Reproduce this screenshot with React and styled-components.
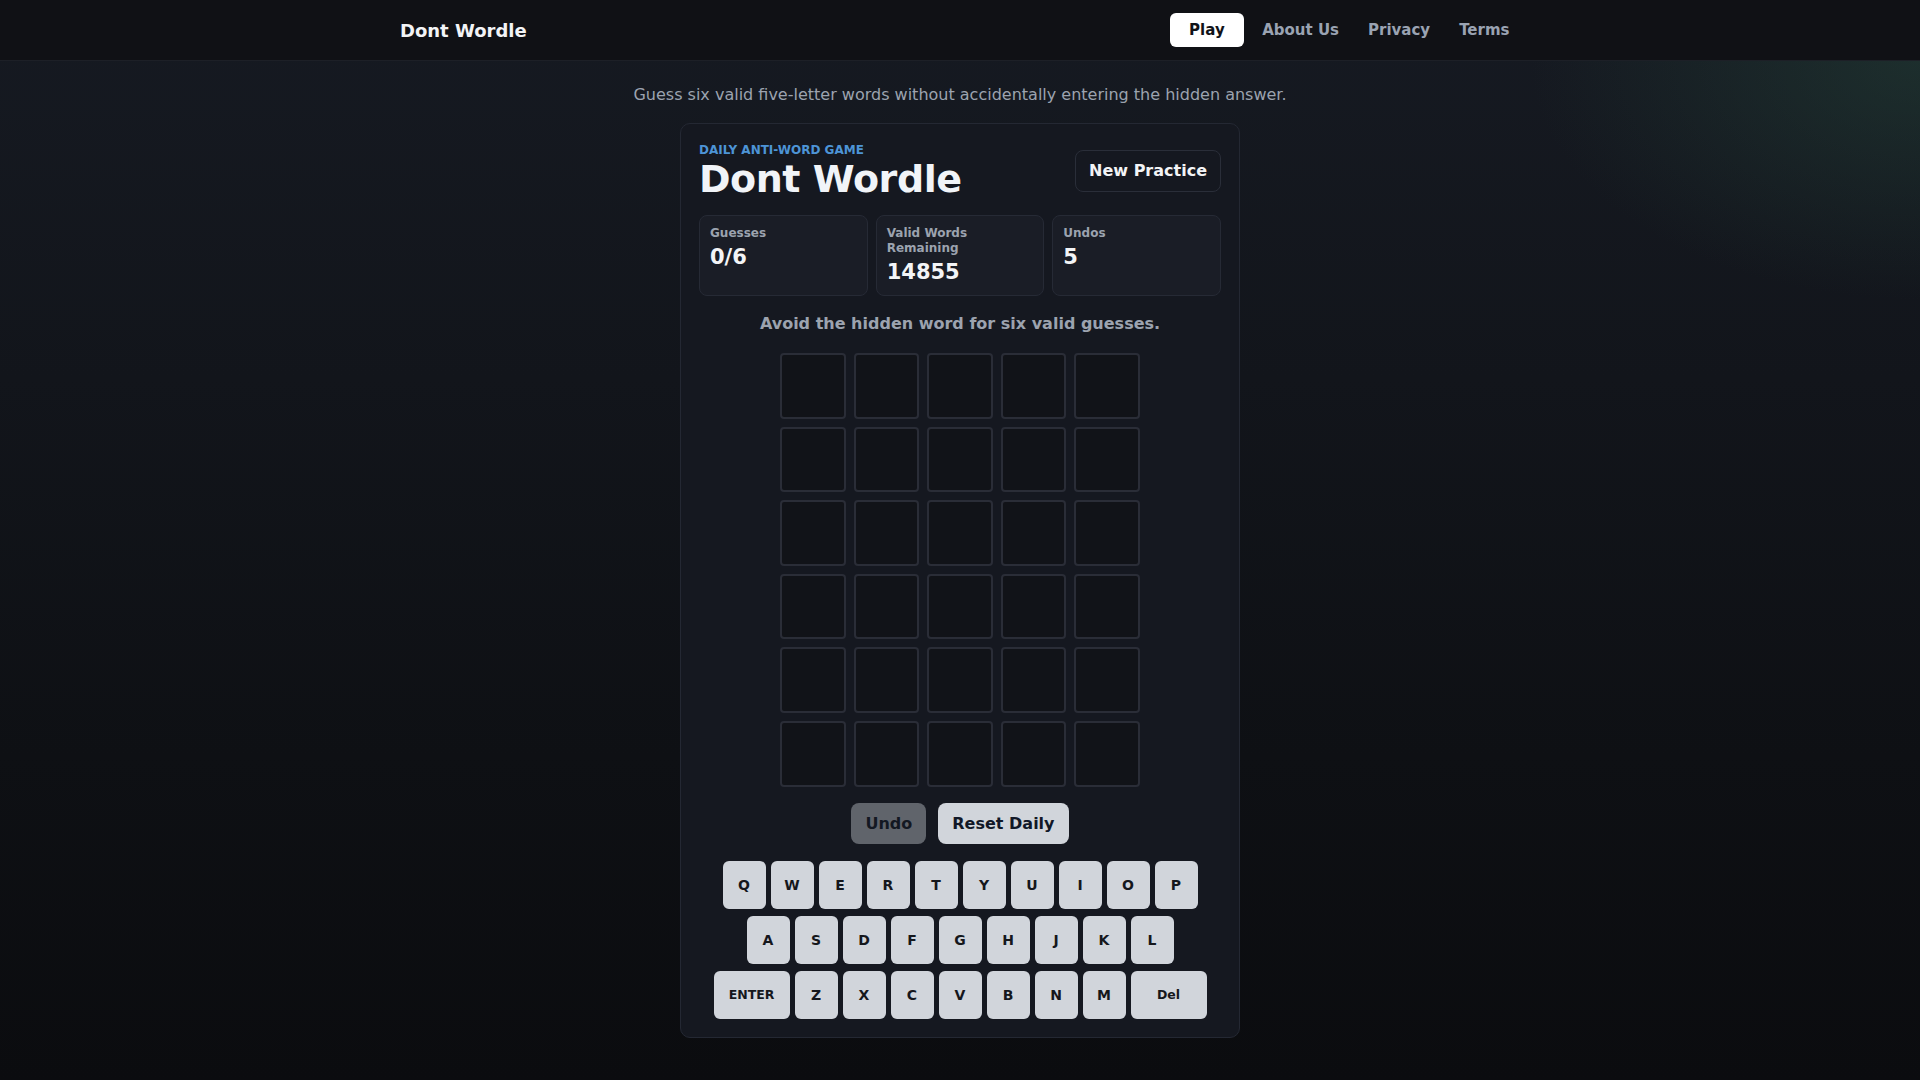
import React from "react";
import styled, { createGlobalStyle } from "styled-components";

const GlobalStyle = createGlobalStyle`
  html, body { margin: 0; padding: 0; }
  body {
    font-family: "DejaVu Sans", "Noto Sans", sans-serif;
    color: #e5e7eb;
    background-color: #0c0d10;
    min-height: 100vh;
  }
  * { box-sizing: border-box; }
`;

const Page = styled.div`
  min-height: 100vh;
  display: flex;
  flex-direction: column;
  background:
    radial-gradient(520px 320px at 100% 60px, rgba(38, 72, 60, 0.45), rgba(38, 72, 60, 0) 75%),
    linear-gradient(180deg, #161a22 0%, #12151b 35%, #0e1014 70%, #0b0c0f 100%);
`;

const Header = styled.header`
  background: #101115;
  border-bottom: 1px solid #1d2027;
`;

const HeaderInner = styled.div`
  max-width: 1120px;
  height: 60px;
  margin: 0 auto;
  display: flex;
  align-items: center;
  justify-content: space-between;
`;

const Brand = styled.a`
  font-size: 18px;
  font-weight: 700;
  color: #f3f4f6;
  text-decoration: none;
`;

const Nav = styled.nav`
  display: flex;
  align-items: center;
  gap: 8px;
`;

const NavLink = styled.a`
  font-size: 15px;
  font-weight: 700;
  line-height: 20px;
  padding: 7px ${(p) => (p.$active ? "19px" : "10.5px")};
  border-radius: 6px;
  text-decoration: none;
  color: ${(p) => (p.$active ? "#111318" : "#9aa3b2")};
  background: ${(p) => (p.$active ? "#ffffff" : "transparent")};
`;

const Main = styled.main`
  flex: 1;
  display: flex;
  flex-direction: column;
  align-items: center;
  padding: 22px 0 24px;
`;

const Tagline = styled.p`
  margin: 0 0 16px;
  font-size: 16px;
  line-height: 24px;
  color: #9ca3af;
`;

const Card = styled.section`
  width: 560px;
  padding: 18px;
  background: #151820;
  border: 1px solid #242833;
  border-radius: 10px;
`;

const CardHead = styled.div`
  display: flex;
  align-items: center;
  justify-content: space-between;
`;

const Eyebrow = styled.div`
  font-size: 12px;
  line-height: 16px;
  font-weight: 700;
  color: #4d94d6;
  margin-bottom: 2px;
`;

const Title = styled.h1`
  margin: 0;
  font-size: 38px;
  line-height: 39px;
  font-weight: 700;
  letter-spacing: -0.45px;
  color: #f1f4f8;
`;

const GhostButton = styled.button`
  font-family: inherit;
  font-size: 16px;
  line-height: 18px;
  font-weight: 700;
  color: #f3f4f6;
  background: #151820;
  border: 1px solid #2a2e39;
  border-radius: 8px;
  padding: 11px 13px;
`;

const Stats = styled.div`
  display: grid;
  grid-template-columns: repeat(3, 1fr);
  gap: 8px;
  margin-top: 16px;
`;

const Stat = styled.div`
  background: #1a1d26;
  border: 1px solid #262a35;
  border-radius: 8px;
  padding: 10px;
`;

const StatLabel = styled.div`
  font-size: 12px;
  line-height: 15px;
  font-weight: 700;
  color: #9ca3af;
`;

const StatValue = styled.div`
  margin-top: 4px;
  font-size: 21px;
  line-height: 25px;
  font-weight: 700;
  color: #f3f4f6;
`;

const Hint = styled.p`
  margin: 16px 0 17px;
  text-align: center;
  font-size: 16px;
  line-height: 24px;
  font-weight: 700;
  color: #9ca3af;
`;

const Board = styled.div`
  width: 360px;
  margin: 0 auto;
  display: grid;
  grid-template-columns: repeat(5, 1fr);
  gap: 8px;
`;

const Tile = styled.div`
  aspect-ratio: 1 / 1;
  background: #111318;
  border: 2px solid #2a2d37;
  border-radius: 4px;
`;

const Actions = styled.div`
  display: flex;
  justify-content: center;
  gap: 12px;
  margin-top: 16px;
`;

const ActionButton = styled.button`
  font-family: inherit;
  font-size: 16px;
  line-height: 19px;
  font-weight: 700;
  padding: 11px 14px;
  border: none;
  border-radius: 8px;
  background: #d1d5db;
  color: #111827;
  opacity: ${(p) => (p.disabled ? 0.4 : 1)};
`;

const Keyboard = styled.div`
  display: flex;
  flex-direction: column;
  align-items: center;
  gap: 7px;
  margin-top: 17px;
`;

const KeyRow = styled.div`
  display: flex;
  gap: 5px;
`;

const Key = styled.button`
  font-family: inherit;
  width: ${(p) => (p.$wide ? "76px" : "43px")};
  height: 48px;
  padding: 0;
  border: none;
  border-radius: 6px;
  background: #d1d5db;
  color: #15171c;
  font-size: ${(p) => (p.$wide ? "12.5px" : "14px")};
  font-weight: 700;
`;

const rows = [
  ["Q", "W", "E", "R", "T", "Y", "U", "I", "O", "P"],
  ["A", "S", "D", "F", "G", "H", "J", "K", "L"],
  ["ENTER", "Z", "X", "C", "V", "B", "N", "M", "Del"],
];

export default function App() {
  return (
    <>
      <GlobalStyle />
      <Page>
        <Header>
          <HeaderInner>
            <Brand href="#">Dont Wordle</Brand>
            <Nav>
              <NavLink $active href="#">Play</NavLink>
              <NavLink href="#">About Us</NavLink>
              <NavLink href="#">Privacy</NavLink>
              <NavLink href="#">Terms</NavLink>
            </Nav>
          </HeaderInner>
        </Header>
        <Main>
          <Tagline>Guess six valid five-letter words without accidentally entering the hidden answer.</Tagline>
          <Card>
            <CardHead>
              <div>
                <Eyebrow>DAILY ANTI-WORD GAME</Eyebrow>
                <Title>Dont Wordle</Title>
              </div>
              <GhostButton>New Practice</GhostButton>
            </CardHead>
            <Stats>
              <Stat>
                <StatLabel>Guesses</StatLabel>
                <StatValue>0/6</StatValue>
              </Stat>
              <Stat>
                <StatLabel>Valid Words Remaining</StatLabel>
                <StatValue>14855</StatValue>
              </Stat>
              <Stat>
                <StatLabel>Undos</StatLabel>
                <StatValue>5</StatValue>
              </Stat>
            </Stats>
            <Hint>Avoid the hidden word for six valid guesses.</Hint>
            <Board>
              {Array.from({ length: 30 }).map((_, i) => (
                <Tile key={i} />
              ))}
            </Board>
            <Actions>
              <ActionButton disabled>Undo</ActionButton>
              <ActionButton>Reset Daily</ActionButton>
            </Actions>
            <Keyboard>
              {rows.map((row, r) => (
                <KeyRow key={r}>
                  {row.map((k) => (
                    <Key key={k} $wide={k.length > 1}>
                      {k}
                    </Key>
                  ))}
                </KeyRow>
              ))}
            </Keyboard>
          </Card>
        </Main>
      </Page>
    </>
  );
}
